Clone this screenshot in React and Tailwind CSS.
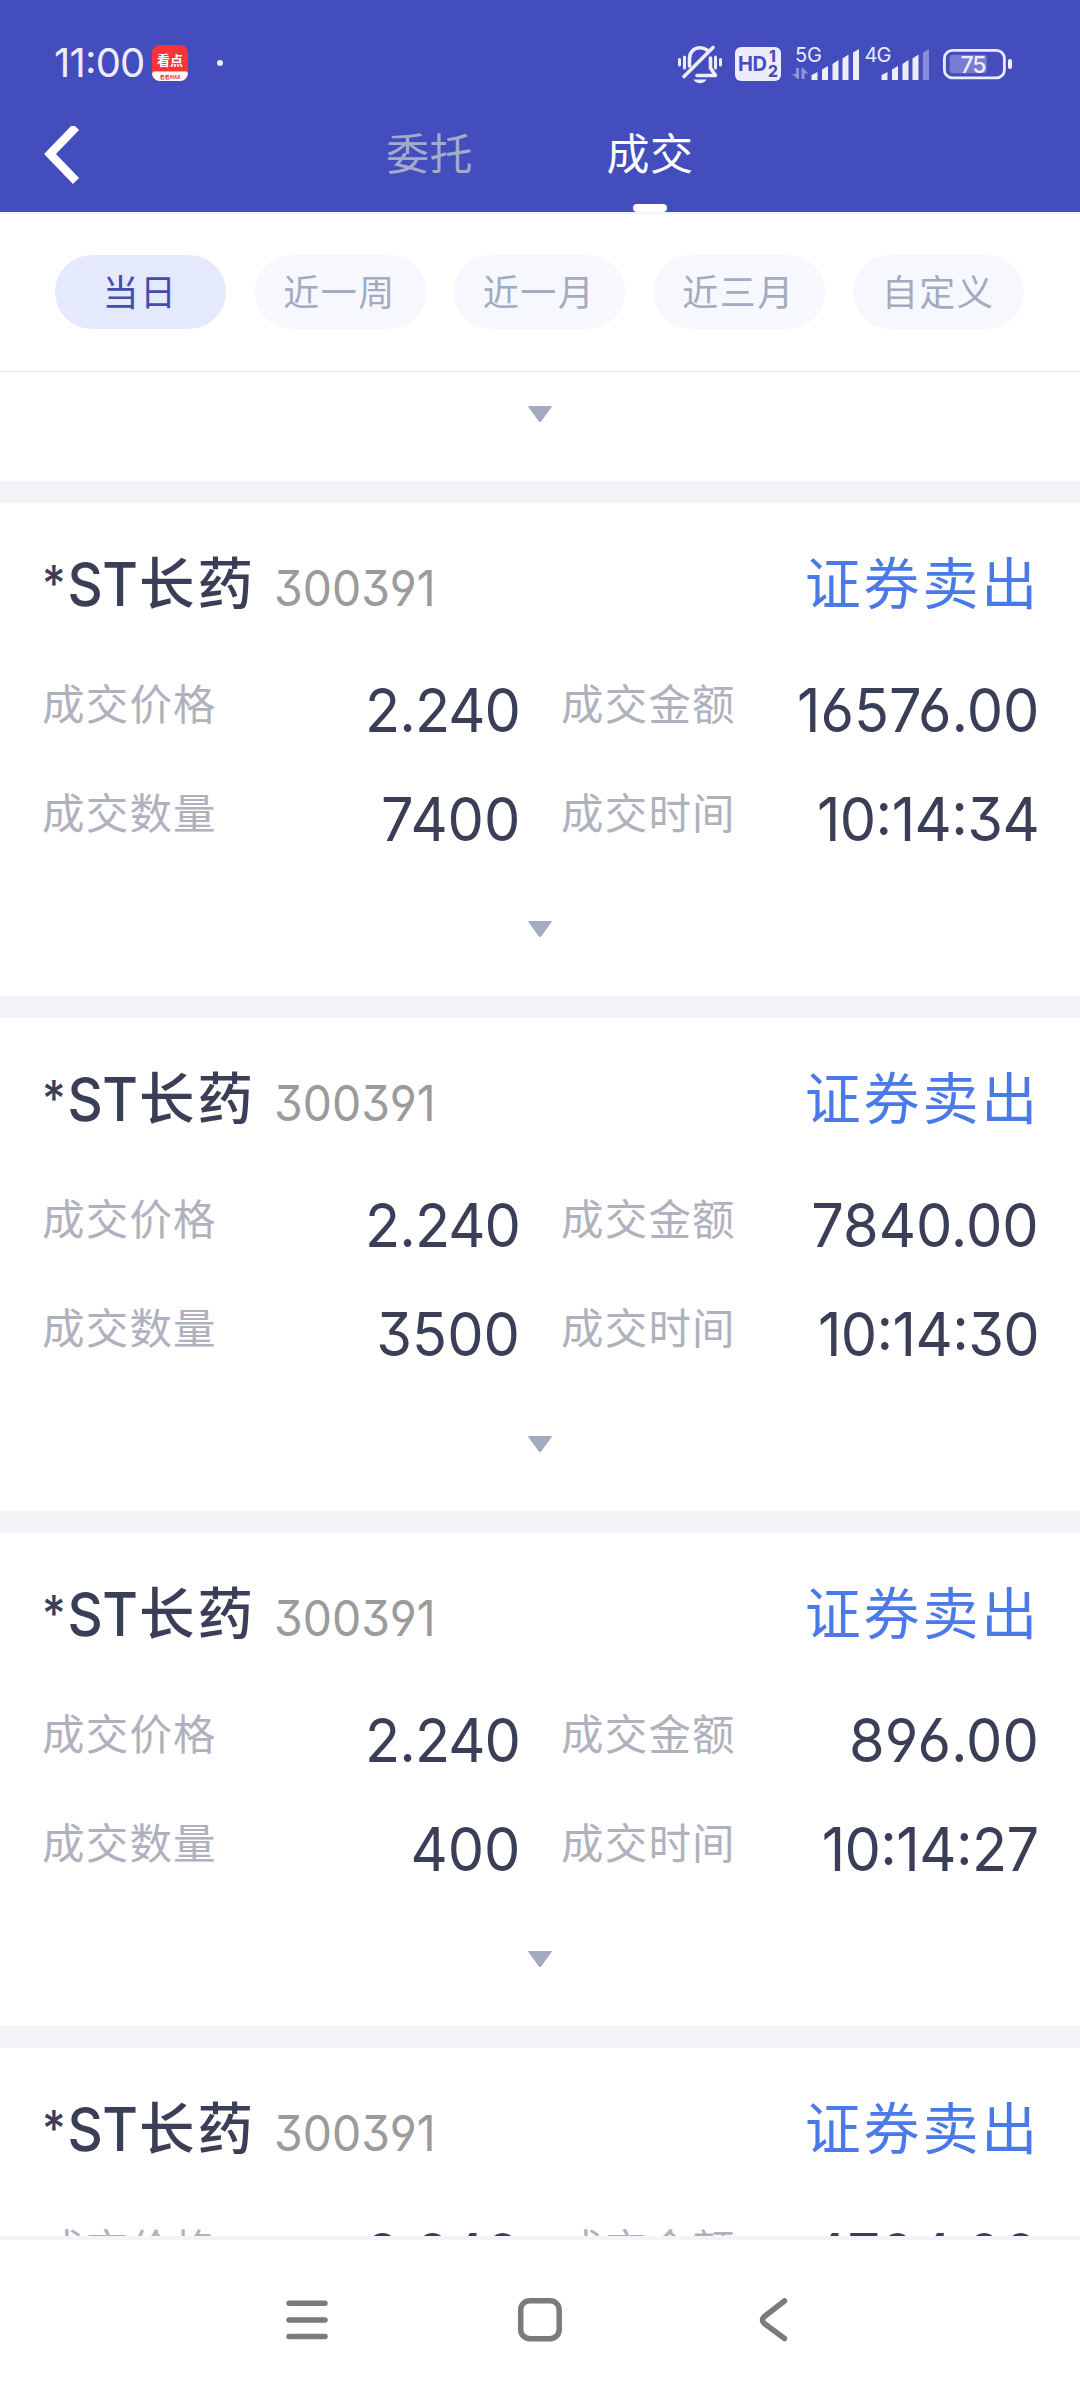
const CJK = "font-['Noto_Sans_CJK_SC',sans-serif]";
const NUM = "font-[Inter,'Noto_Sans_CJK_SC',sans-serif] [font-feature-settings:'cv09','cv03','cv04','calt']";

const RANGES = ["当日", "近一周", "近一月", "近三月", "自定义"];

const TRADES = [
  { price: "2.240", amount: "16576.00", qty: "7400", time: "10:14:34" },
  { price: "2.240", amount: "7840.00", qty: "3500", time: "10:14:30" },
  { price: "2.240", amount: "896.00", qty: "400", time: "10:14:27" },
  { price: "2.240", amount: "4704.00", qty: "2100", time: "10:14:25" },
];

function Bars({ dim }) {
  return (
    <>
      <path d="M0 26 L6 23 V31 H0 Z" />
      <path d="M10.500 20.500 L16.500 17 V31 H10.500 Z" />
      <path d="M21 15 L27 11 V31 H21 Z" />
      <path d="M31 9.500 L37 5.500 V31 H31 Z" />
      <path d="M41.500 3.500 L47.500 0 V31 H41.500 Z" opacity={dim ? 0.4 : 1} />
    </>
  );
}

function StatusIcons() {
  return (
    <svg width="338" height="44" viewBox="676 40 338 44" fill="#ececfb" fontFamily="Inter">
      <g fill="none" stroke="#ececfb" strokeWidth="3.600" strokeLinecap="round">
        <path d="M679.500 58.500 V64 M684.500 56 V67 M715.500 56 V67 M720.500 58.500 V64" strokeWidth="3" />
        <path d="M689.500 65 V58 C689.500 51 694 46.800 700 46.800 C703 46.800 705 47.600 707 49" />
        <path d="M710.500 57 V67 L715.500 74.500 H697" strokeLinejoin="round" />
        <path d="M713 46.500 L684 75.500" />
      </g>
      <path d="M693.500 78.500 H706.500 C704 83.500 696 83.500 693.500 78.500 Z" />
      <rect x="735" y="46" width="46" height="34" rx="6" />
      <g fill="#444dbe">
        <text x="738" y="70" fontSize="20" fontWeight="700" textLength="29">HD</text>
        <text x="769" y="61" fontSize="15.500" fontWeight="800">1</text>
        <text x="768" y="75.500" fontSize="15.500" fontWeight="800">2</text>
      </g>
      <text x="795" y="60.500" fontSize="20" textLength="27">5G</text>
      <text x="864.500" y="60.500" fontSize="20" textLength="27">4G</text>
      <g opacity=".45">
        <path d="M792 73 H796 V67 H799 V78 H797.500 Z" />
        <path d="M808.500 72.500 H804.500 V78 H801.500 V67 H803 Z" />
      </g>
      <g transform="translate(811.500 48)"><Bars /></g>
      <g transform="translate(881.500 48)"><Bars dim /></g>
      <rect x="944.400" y="49.400" width="60" height="27.500" rx="8" fill="none" stroke="#ececfb" strokeWidth="2.800" />
      <rect x="949.700" y="53.700" width="37" height="18.500" rx="3" opacity=".3" />
      <text x="973.500" y="71.700" fontSize="23" fontWeight="500" textAnchor="middle" textLength="26">75</text>
      <rect x="1008" y="58" width="4" height="10" rx="2" />
    </svg>
  );
}

function AppBadge() {
  return (
    <div className={`${CJK} ml-[9px] flex h-9 w-9 flex-col overflow-hidden rounded-lg bg-[#fb3338]`}>
      <div className="flex h-[26px] items-center justify-center pt-[3px] text-[13px] leading-none font-bold text-white">看点</div>
      <div className="flex h-[10px] items-center justify-center rounded-t-[3px] border-t border-[#ffb05a] bg-white text-[5px] leading-none font-bold text-[#e0353a]">
        看看MAX
      </div>
    </div>
  );
}

function Header() {
  return (
    <header className="h-[212px] bg-[#444dbe]">
      <div className="flex h-[126px] items-center pl-[54px]">
        <span className={`${NUM} w-[89px] text-[40px] leading-[48px] tracking-[-0.8px] whitespace-nowrap text-[#ececfb]`}>11:00</span>
        <AppBadge />
        <span className="ml-[29px] h-[6px] w-[6px] rounded-full bg-[#ececfb]" />
        <div className="ml-auto pr-[66px]">
          <StatusIcons />
        </div>
      </div>
      <div className="flex h-[86px] pl-[44px]">
        <svg width="36" height="60" viewBox="0 0 36 60" fill="none" stroke="#fff" strokeWidth="8.500">
          <path d="M32 1 L6 28 L32 55" />
        </svg>
        <div className={`${CJK} ml-[285px] flex text-[43px] leading-[50px] tracking-[0.6px]`}>
          <span className="w-[220px] pl-[21px] text-[#a2abc8]">委托</span>
          <div className="flex w-[130px] flex-col items-center">
            <span className="h-[78px] text-white">成交</span>
            <span className="h-2 w-[34px] rounded-[4px] bg-white" />
          </div>
        </div>
      </div>
    </header>
  );
}

function Filters() {
  return (
    <div className="flex h-[160px] items-start gap-[28.500px] border-t-2 border-b border-t-[#f3f4f7] border-b-[#e5e5e5] pt-[41px] pl-[55px]">
      {RANGES.map((r, i) => (
        <button
          key={r}
          className={`${CJK} h-[74px] w-[171px] rounded-full pr-[1px] pb-1 text-[36px] leading-[70px] tracking-[1.500px] ${
            i === 0 ? "bg-[#e4e9fe] text-[#444dae]" : "bg-[#f6f8fd] text-[#a2abbf]"
          }`}
        >
          {r}
        </button>
      ))}
    </div>
  );
}

function Arrow() {
  return (
    <svg width="26" height="17" viewBox="0 0 26 17" className="mx-auto block">
      <path d="M1.500 0.500 H24.500 L14 15 Q13 16.500 12 15 Z" fill="#a2abbf" stroke="#a2abbf" strokeLinejoin="round" />
    </svg>
  );
}

function Pair({ label, value, spacing = "" }) {
  return (
    <div className="flex h-[70px] justify-between">
      <span className={`${CJK} text-[42.500px] leading-[64px] tracking-[1.200px] text-[#afb1bd]`}>{label}</span>
      <span className={`${NUM} ${spacing} -mr-[2px] origin-right scale-x-[0.945] pt-[5px] text-[61px] leading-[70px] text-[#3a3f57]`}>
        {value}
      </span>
    </div>
  );
}

function Trade({ t }) {
  return (
    <article className="h-[515px] shrink-0 border-b-[22px] border-[#f3f4f7] px-[42px] pt-[37px]">
      <div className="flex h-[80px] items-baseline leading-[80px] text-[#3a3f57]">
        <span className={`${NUM} -mr-[13px] flex origin-left scale-x-[0.91] items-baseline text-[60px] font-medium`}>
          <span className="w-[28px] -translate-y-[3px] text-[50px] tracking-[-2px]">*</span>
          <span className="w-[80px] translate-y-[2px] tracking-[-0.500px]">ST</span>
        </span>
        <span className={`${CJK} ml-[2px] text-[55.500px] font-medium tracking-[3px]`}>长药</span>
        <span className={`${NUM} ml-[18px] origin-left scale-x-[0.945] translate-y-[2px] text-[49px] text-[#9b9b9b]`}>300391</span>
        <span className={`${CJK} -mr-[2px] ml-auto text-[56px] tracking-[2.800px] text-[#4a7ae8]`}>证券卖出</span>
      </div>
      <div className="mt-[50px] grid h-[179px] grid-cols-[476px_476px] gap-x-[43px] gap-y-[39px]">
        <Pair label="成交价格" value={t.price} spacing="tracking-[-1px]" />
        <Pair label="成交金额" value={t.amount} />
        <Pair label="成交数量" value={t.qty} />
        <Pair label="成交时间" value={t.time} spacing="tracking-[-0.600px]" />
      </div>
      <div className="mt-[72px]">
        <Arrow />
      </div>
    </article>
  );
}

function NavBar() {
  return (
    <nav className="h-[164px] border-t-4 border-[#f3f4f7] bg-white">
      <svg width="1080" height="160" viewBox="0 2240 1080 160" fill="none" stroke="#7b7b7b" strokeWidth="5.500" strokeLinecap="round" strokeLinejoin="round">
        <path d="M289 2303.300 H325 M289 2320 H325 M289 2336.500 H325" />
        <rect x="520.700" y="2300.700" width="38.500" height="38" rx="9" />
        <path d="M784.500 2301 L765 2316 Q760 2320 765 2324 L784.500 2338.500" />
      </svg>
    </nav>
  );
}

export default function App() {
  return (
    <div className="flex h-[2400px] w-[1080px] flex-col overflow-hidden bg-white">
      <Header />
      <Filters />
      <main className="flex h-[1864px] flex-col overflow-hidden">
        <div className="h-[131px] shrink-0 border-b-[22px] border-[#f3f4f7] pt-[34px]">
          <Arrow />
        </div>
        {TRADES.map((t) => (
          <Trade key={t.time} t={t} />
        ))}
      </main>
      <NavBar />
    </div>
  );
}
